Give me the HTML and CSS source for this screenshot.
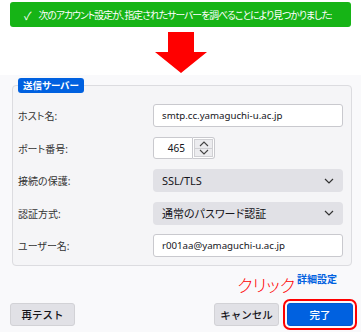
FILE: index.html
```html
<!DOCTYPE html>
<html lang="ja">
<head>
  <meta charset="UTF-8">
  <meta name="viewport" content="width=device-width, initial-scale=1.0">
  <title>送信サーバー設定</title>
  <link rel="stylesheet" href="styles.css">
</head>
<body>
  <div class="notice">
    <span class="notice-check">✓</span>
    <span class="notice-text">次のアカウント設定が、指定されたサーバーを調べることにより見つかりました:</span>
  </div>

  <div class="arrow-wrap">
    <svg class="arrow" width="52" height="41" viewBox="0 0 52 41">
      <path d="M13 0H39V20H52L26 41L0 20H13Z" fill="#ff0000"/>
    </svg>
  </div>

  <main class="panel">
    <fieldset class="server">
      <legend>送信サーバー</legend>
      <div class="form-grid">
        <span class="field-label">ホスト名:</span>
        <div class="text-field">smtp.cc.yamaguchi-u.ac.jp</div>

        <span class="field-label">ポート番号:</span>
        <div class="port">
          <div class="text-field port-value">465</div>
          <div class="spinner">
            <span class="spin-btn">
              <svg width="10" height="6" viewBox="0 0 10 6"><path d="M1 5L5 1L9 5" fill="none" stroke="#444" stroke-width="1.1"/></svg>
            </span>
            <span class="spin-btn">
              <svg width="10" height="6" viewBox="0 0 10 6"><path d="M1 1L5 5L9 1" fill="none" stroke="#444" stroke-width="1.1"/></svg>
            </span>
          </div>
        </div>

        <span class="field-label">接続の保護:</span>
        <div class="select">
          <span>SSL/TLS</span>
          <svg width="10" height="6" viewBox="0 0 10 6"><path d="M1 1L5 5L9 1" fill="none" stroke="#333" stroke-width="1.2"/></svg>
        </div>

        <span class="field-label">認証方式:</span>
        <div class="select">
          <span>通常のパスワード認証</span>
          <svg width="10" height="6" viewBox="0 0 10 6"><path d="M1 1L5 5L9 1" fill="none" stroke="#333" stroke-width="1.2"/></svg>
        </div>

        <span class="field-label">ユーザー名:</span>
        <div class="text-field">r001aa@yamaguchi-u.ac.jp</div>
      </div>
    </fieldset>

    <div class="advanced-row">
      <span class="annotation">クリック</span>
      <a class="advanced-link" href="#">詳細設定</a>
    </div>

    <div class="button-row">
      <button class="btn">再テスト</button>
      <span class="spacer"></span>
      <button class="btn">キャンセル</button>
      <button class="btn btn-primary">完了</button>
    </div>
  </main>
</body>
</html>
```

FILE: styles.css
```css
* {
  box-sizing: border-box;
}
body {
  margin: 0;
  width: 361px;
  height: 332px;
  overflow: hidden;
  background-color: #fff;
  color: #15141a;
  font-family: 'Noto Sans', 'Noto Sans CJK JP', sans-serif;
  font-feature-settings: "palt";
}
.notice {
  display: flex;
  align-items: center;
  gap: 7px;
  height: 25px;
  margin: 2px 10px 0;
  padding-left: 14px;
  background-color: #16b416;
  border-radius: 3px;
  color: #fff;
  white-space: nowrap;
  overflow: hidden;
}
.notice-check {
  font-size: 11px;
}
.notice-text {
  font-size: 9.8px;
  letter-spacing: -0.95px;
}
.arrow-wrap {
  display: flex;
  justify-content: center;
  height: 48px;
  padding-top: 5px;
}
.arrow {
  display: block;
}
.panel {
  height: 257px;
  padding-top: 3px;
  background-color: #f9f9fb;
}
.server {
  margin: 0 9px 0 12px;
  padding: 11px 7px 8px 5px;
  border: 1px solid #dcdce0;
  border-radius: 4px;
  background-color: #f5f5f7;
}
.server legend {
  padding: 0 5px;
  height: 15px;
  line-height: 15px;
  background-color: #0061e0;
  border-radius: 3px;
  color: #fff;
  font-size: 9.5px;
  font-weight: bold;
}
.form-grid {
  display: grid;
  grid-template-columns: 135px 190px;
  grid-auto-rows: 23px;
  row-gap: 9.5px;
  align-items: center;
}
.field-label {
  font-size: 10px;
  color: #333;
}
.text-field {
  height: 23px;
  padding: 0 8px;
  display: flex;
  align-items: center;
  background-color: #fff;
  border: 1px solid #c9c9ce;
  border-radius: 3px;
  font-size: 9.7px;
}
.port {
  display: flex;
  height: 22px;
}
.port-value {
  width: 40px;
  height: 22px;
  justify-content: flex-end;
  padding-right: 7px;
  border-radius: 3px 0 0 3px;
  font-size: 10px;
}
.spinner {
  display: flex;
  flex-direction: column;
  width: 22px;
  border: 1px solid #c9c9ce;
  border-left: none;
  border-radius: 0 3px 3px 0;
  background-color: #fff;
  padding: 1px;
}
.spin-btn {
  flex: 1;
  display: flex;
  align-items: center;
  justify-content: center;
  background-color: #ececef;
  border: 1px solid #d0d0d4;
}
.spin-btn + .spin-btn {
  border-top: none;
}
.select {
  height: 23px;
  display: flex;
  align-items: center;
  justify-content: space-between;
  padding: 0 9px;
  background-color: #e1e1e6;
  border-radius: 4px;
  font-size: 11px;
}
.advanced-row {
  display: flex;
  justify-content: flex-end;
  align-items: flex-start;
  height: 37px;
  padding-right: 24px;
}
.annotation {
  margin-top: 10px;
  color: #f00;
  font-size: 17px;
  line-height: 20px;
  font-weight: 300;
}
.advanced-link {
  margin-top: 5px;
  margin-left: 2px;
  color: #0061e0;
  font-size: 10px;
  font-weight: bold;
  text-decoration: none;
}
.button-row {
  display: flex;
  gap: 8px;
  padding: 0 8px 0 10px;
}
.spacer {
  flex: 1;
}
.btn {
  width: 65px;
  height: 23px;
  padding: 0;
  background-color: #e1e1e6;
  border: 1px solid #d2d2d6;
  border-radius: 3px;
  color: #15141a;
  font-family: inherit;
  font-size: 10.5px;
  font-weight: 500;
}
.btn-primary {
  width: 66px;
  background-color: #0061e0;
  border-color: #0059d0;
  color: #fff;
  outline: 2px solid #f00;
  outline-offset: 2px;
}
```
